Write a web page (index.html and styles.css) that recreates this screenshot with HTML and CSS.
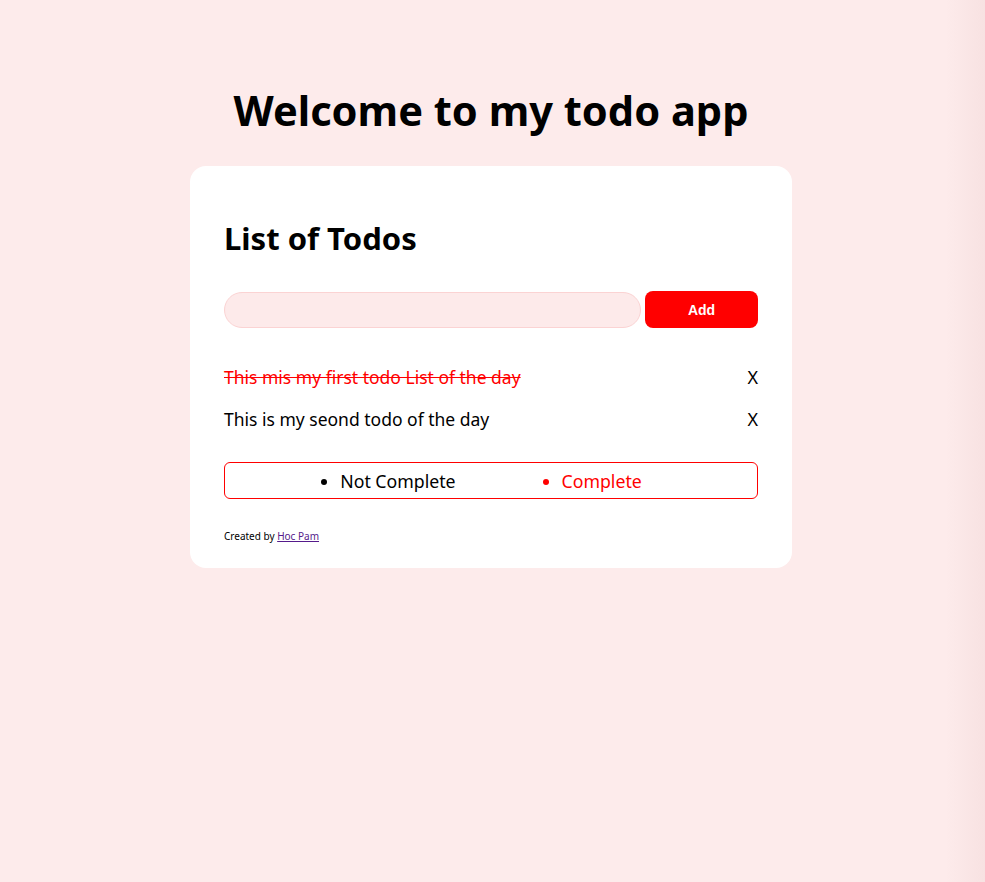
FILE: index.html
```html
<!DOCTYPE html>
<html lang="en">
<head>
<meta charset="utf-8">
<title>Todo app</title>
<link rel="stylesheet" href="styles.css">
</head>
<body>
<div class="page">
  <h1 class="title">Welcome to my todo app</h1>
  <div class="card">
    <h2 class="card-title">List of Todos</h2>
    <form class="add-form">
      <input class="add-input" type="text">
      <button class="add-btn" type="button">Add</button>
    </form>
    <ul class="todos">
      <li class="todo done"><span class="todo-text">This mis my first todo List of the day</span><span class="todo-x">X</span></li>
      <li class="todo"><span class="todo-text">This is my seond todo of the day</span><span class="todo-x">X</span></li>
    </ul>
    <ul class="filters">
      <li class="filter">Not Complete</li>
      <li class="filter active">Complete</li>
    </ul>
    <p class="credit">Created by <a class="credit-link" href="#">Hoc Pam</a></p>
  </div>
</div>
</body>
</html>
```
FILE: styles.css
```css
html {
  background-color: #fdebeb;
  background-image: linear-gradient(to right, rgba(0,0,0,0) 96%, rgba(160,80,80,0.06) 100%);
  min-height: 100%;
}
body {
  margin: 0;
  font-family: "Noto Sans", "Open Sans", sans-serif;
  color: #000;
}
.page {
  padding-top: 80px;
  padding-right: 3px;
}
.title {
  margin: 0 0 26px;
  text-align: center;
  font-size: 41.6px;
  line-height: 60px;
  font-weight: 700;
}
.card {
  width: 602px;
  box-sizing: border-box;
  margin: 0 auto;
  background: #fff;
  border-radius: 16px;
  padding: 52px 34px 25px;
}
.card-title {
  margin: 0 0 33px;
  font-size: 31px;
  line-height: 40px;
  font-weight: 700;
}
.add-form {
  display: flex;
  gap: 4px;
  align-items: center;
}
.add-input {
  flex: 1;
  height: 36px;
  box-sizing: border-box;
  border: 1px solid #fbd3d3;
  background: #fdeaea;
  border-radius: 18px;
  padding: 0 14px;
  outline: none;
}
.add-btn {
  width: 113px;
  height: 37px;
  border: none;
  border-radius: 8px;
  background: #ff0000;
  color: #fff;
  font-family: "Liberation Sans", Arial, sans-serif;
  font-weight: 700;
  font-size: 14px;
}
.todos {
  list-style: none;
  margin: 28px 0 0;
  padding: 0;
}
.todo {
  display: flex;
  justify-content: space-between;
  align-items: center;
  height: 42px;
  font-size: 17.5px;
}
.todo.done .todo-text {
  color: #ff0000;
  text-decoration: line-through;
}
.todo-x {
  font-size: 18px;
}
.filters {
  display: flex;
  justify-content: center;
  gap: 106px;
  margin: 22px 0 0;
  padding: 0;
  height: 37px;
  box-sizing: border-box;
  border: 1px solid #ff0000;
  border-radius: 6px;
  align-items: center;
  font-size: 17.7px;
  list-style: disc outside;
}
.filter.active {
  color: #ff0000;
}
.credit {
  margin: 30px 0 0;
  font-size: 10px;
}
.credit-link {
  color: #551a8b;
}
```
